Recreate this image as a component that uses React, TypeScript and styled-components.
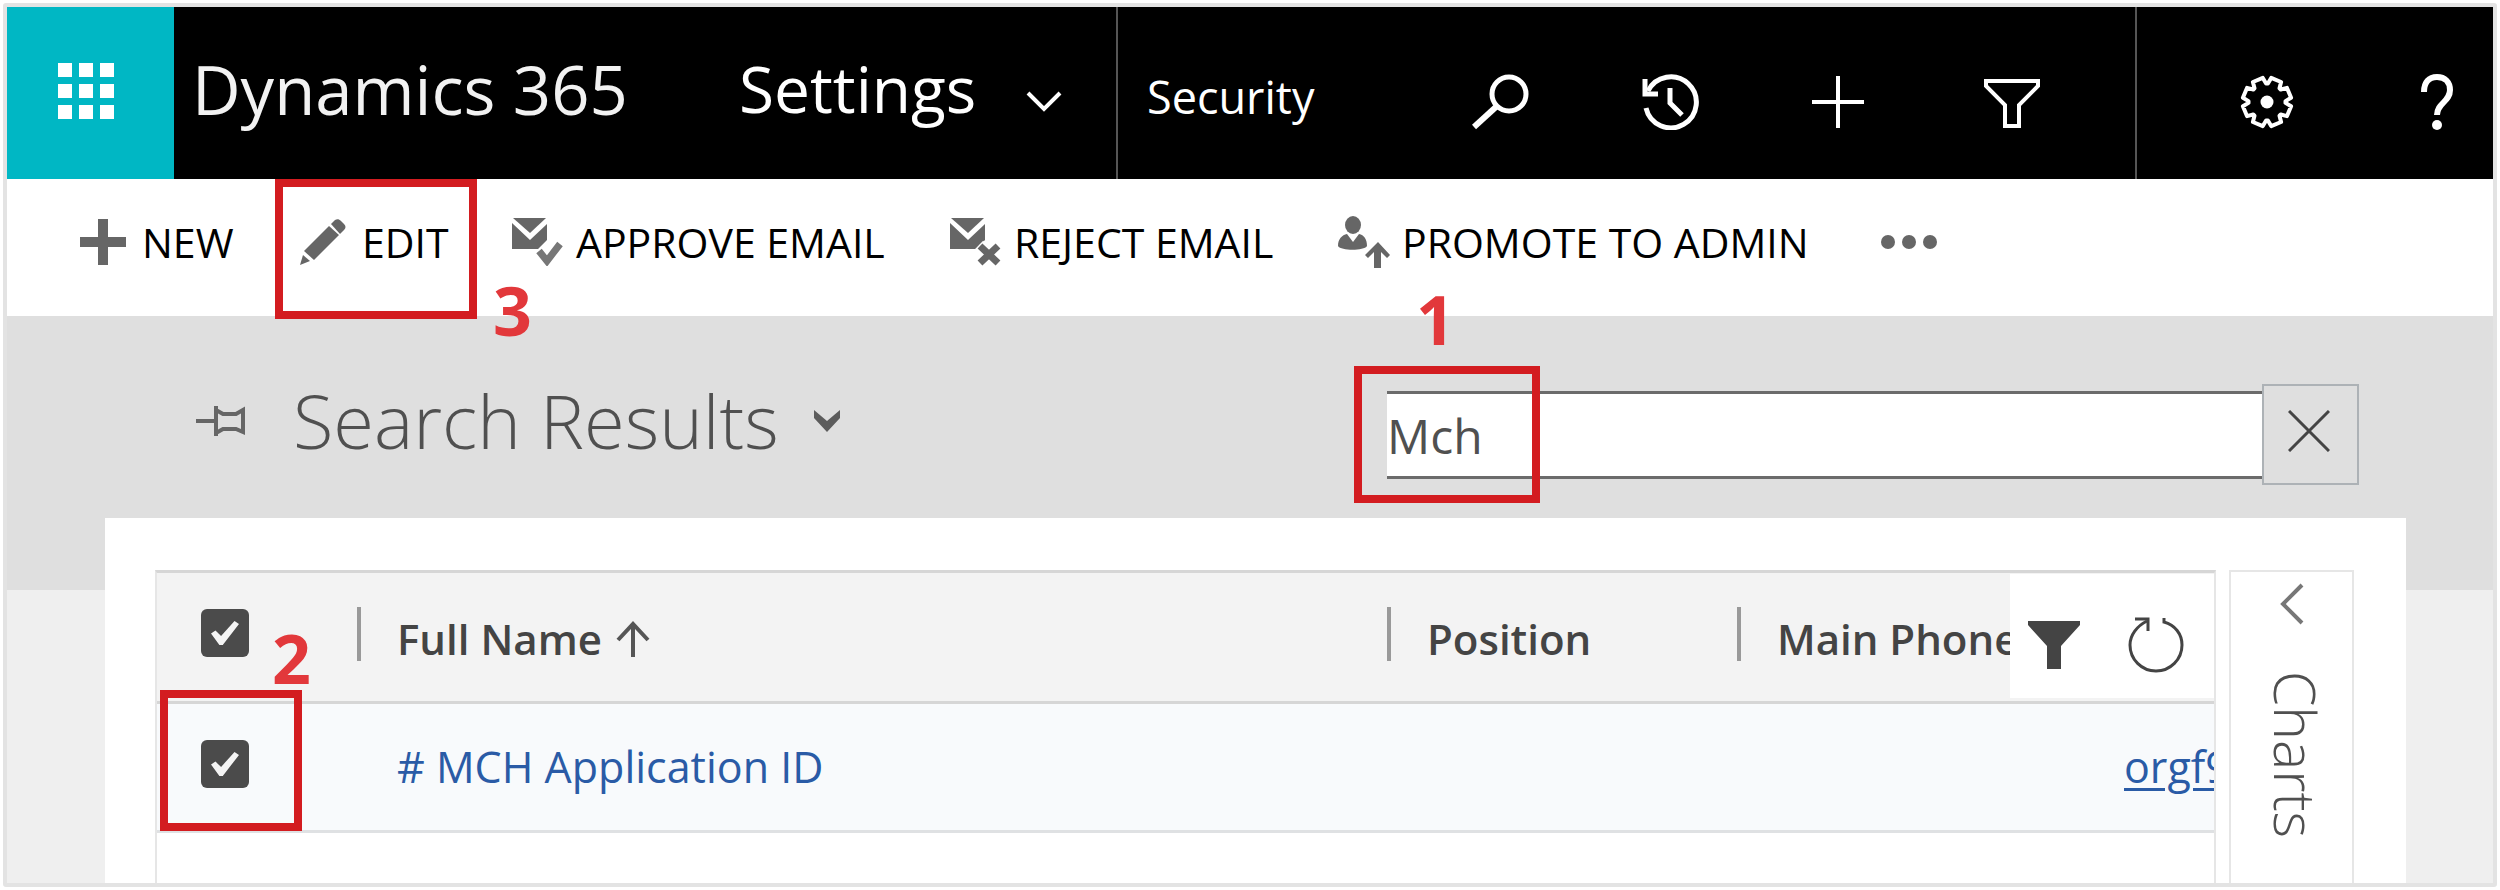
import React, { useState } from "react";
import styled, { createGlobalStyle } from "styled-components";

const font = `"Open Sans", "Noto Sans", sans-serif`;

const GlobalStyle = createGlobalStyle`
  *, *::before, *::after { box-sizing: border-box; }
  body { margin: 0; background: #fff; font-family: ${font}; color: #000; }
  button, input { font-family: inherit; color: inherit; }
  button { border: 0; padding: 0; background: none; cursor: pointer; }
  svg { display: block; flex: none; }
`;

const Frame = styled.div`
  margin: 3px;
  border: 4px solid #e3e3e3;
  border-radius: 3px;
  height: calc(100vh - 6px);
  display: flex;
  flex-direction: column;
  overflow: hidden;
`;

/* ---------- top navigation ---------- */

const TopBar = styled.header`
  flex: none;
  display: flex;
  height: 172px;
  background: #000;
  color: #fff;
`;

const Launcher = styled.button`
  flex: none;
  width: 167px;
  padding: 0 0 4px 51px;
  background: #00b7c4;
  display: flex;
  align-items: center;
`;

const Brand = styled.a`
  flex: none;
  width: 543px;
  padding: 0 0 0 18px;
  color: #f2f2f2;
  font-size: 67px;
  line-height: 164px;
  text-decoration: none;
  white-space: nowrap;
`;

const AreaButton = styled.button`
  flex: none;
  display: flex;
  align-items: center;
  gap: 50px;
  width: 401px;
  padding: 0 0 10px 22px;
  font-size: 64px;
  border-right: 2px solid #555;
`;

const AreaChevron = styled.span`
  padding-top: 26px;
`;

const SubArea = styled.a`
  flex: none;
  width: 352px;
  padding-left: 29px;
  color: #fff;
  font-size: 45px;
  line-height: 180px;
  text-decoration: none;
`;

const IconNav = styled.nav`
  flex: 1;
  display: flex;
  align-items: center;
  gap: 112px;
  padding: 18px 0 0 2px;
`;

const FunnelSlot = styled.span`
  padding: 6px 0 0 7px;
`;

const UserNav = styled.nav`
  flex: none;
  display: flex;
  align-items: center;
  gap: 126px;
  padding: 18px 40px 0 102px;
  border-left: 2px solid #555;
`;

/* ---------- command bar ---------- */

const CommandBar = styled.div`
  flex: none;
  display: flex;
  height: 137px;
  padding-left: 73px;
  background: #fff;
`;

const CommandSlot = styled.div<{ $width: number }>`
  position: relative;
  flex: none;
  width: ${(p) => p.$width}px;
`;

const Command = styled.button<{ $gap?: number }>`
  display: flex;
  align-items: center;
  gap: ${(p) => p.$gap ?? 12}px;
  height: 126px;
  font-size: 41px;
  white-space: nowrap;
`;

const Highlight = styled.span<{ $top: number; $left: number; $width: number; $height: number }>`
  position: absolute;
  z-index: 2;
  top: ${(p) => p.$top}px;
  left: ${(p) => p.$left}px;
  width: ${(p) => p.$width}px;
  height: ${(p) => p.$height}px;
  border: 8px solid #d31c20;
  pointer-events: none;
`;

const StepNumber = styled.span<{ $top: number; $left: number }>`
  position: absolute;
  z-index: 2;
  top: ${(p) => p.$top}px;
  left: ${(p) => p.$left}px;
  color: #e2383b;
  font-size: 68px;
  font-weight: 700;
  line-height: 72px;
  pointer-events: none;
`;

/* ---------- content ---------- */

const Main = styled.main`
  flex: 1;
  min-height: 0;
  display: flex;
  flex-direction: column;
  background: linear-gradient(#dfdfdf 274px, #efefef 274px);
`;

const ViewHeader = styled.div`
  flex: none;
  display: flex;
  justify-content: space-between;
  height: 202px;
  padding: 68px 134px 0 189px;
`;

const ViewPicker = styled.div`
  display: flex;
  align-items: center;
  height: 74px;
`;

const ViewTitle = styled.h1`
  margin: 0 35px 0 47px;
  color: #505050;
  font-size: 74px;
  font-weight: 300;
  line-height: 74px;
  white-space: nowrap;
`;

const SearchBox = styled.div`
  position: relative;
  display: flex;
  align-items: center;
  width: 972px;
  height: 101px;
`;

const SearchInput = styled.input`
  flex: 1;
  min-width: 0;
  height: 88px;
  padding: 2px 0 0;
  border: solid #6b6b6b;
  border-width: 3px 0;
  border-radius: 0;
  outline: 0;
  background: #fff;
  color: #505050;
  font-size: 48px;
`;

const ClearButton = styled.button`
  flex: none;
  width: 97px;
  height: 101px;
  padding: 0 4px 8px 0;
  border: 2px solid #adb2b6;
  display: grid;
  place-items: center;
`;

const Card = styled.section`
  flex: 1;
  display: flex;
  gap: 13px;
  min-height: 0;
  margin: 0 87px 0 98px;
  padding: 52px 52px 0 50px;
  background: #fff;
`;

const Grid = styled.div`
  position: relative;
  flex: 1;
  min-width: 0;
  border: 2px solid #e6e6e6;
  border-top: 3px solid #d6d6d6;
  border-bottom: 0;
`;

const GridClip = styled.div`
  height: 100%;
  overflow: hidden;
`;

const Table = styled.table`
  width: 100%;
  table-layout: fixed;
  border-collapse: separate;
  border-spacing: 0;
  font-size: 42px;
  line-height: 56px;
  white-space: nowrap;
`;

const Col = styled.col<{ $width?: number }>`
  width: ${(p) => (p.$width ? `${p.$width}px` : "auto")};
`;

const HeadCell = styled.th`
  height: 131px;
  padding: 4px 0 0;
  border-bottom: 3px solid #d6d6d6;
  background: #f3f3f3;
  color: #444;
  font-weight: 600;
  text-align: left;
`;

const HeadLabel = styled.div`
  display: flex;
  align-items: center;
  gap: 14px;
  position: relative;
  padding-left: 40px;

  &::before {
    content: "";
    position: absolute;
    top: -4px;
    left: 0;
    width: 4px;
    height: 54px;
    background: #999;
  }
`;

const Cell = styled.td<{ $indent?: number }>`
  height: 129px;
  padding: 0 0 0 ${(p) => p.$indent ?? 0}px;
  border-bottom: 3px solid #dfe1e3;
  background: #f8fafc;
  font-size: 43px;
`;

const CheckCell = styled.div`
  display: flex;
  padding-left: 44px;
  padding-bottom: 6px;
`;

const HeadCheckCell = styled(CheckCell)`
  padding-bottom: 12px;
`;

const Check = styled.input`
  appearance: none;
  display: grid;
  place-items: center;
  width: 48px;
  height: 48px;
  margin: 0;
  border: 0;
  border-radius: 6px;
  background: #4b4b4b;

  &:checked::after {
    content: "";
    width: 28px;
    height: 24px;
    background: #f4f4f4;
    clip-path: polygon(0 52%, 16% 40%, 36% 62%, 84% 0, 100% 12%, 42% 100%, 30% 100%);
  }
`;

const RecordLink = styled.a`
  color: #2a5ba6;
  text-decoration: none;
`;

const MailLink = styled(RecordLink)`
  text-decoration: underline;
  text-decoration-thickness: 3px;
  text-underline-offset: 5px;
`;

const GridTools = styled.div`
  position: absolute;
  top: 1px;
  right: 0;
  display: flex;
  align-items: center;
  gap: 48px;
  width: 204px;
  height: 124px;
  padding: 18px 18px 0;
  background: #fff;
`;

const ChartsPane = styled.aside`
  flex: none;
  width: 125px;
  border: 2px solid #e6e6e6;
  border-bottom: 0;
`;

const ChartsToggle = styled.button`
  display: flex;
  flex-direction: column;
  align-items: center;
  gap: 46px;
  width: 100%;
  padding-top: 11px;
  color: #505050;
`;

const ChartsLabel = styled.span`
  writing-mode: vertical-rl;
  padding-left: 8px;
  font-size: 57px;
  font-weight: 300;
  line-height: 72px;
`;

/* ---------- icons ---------- */

const Waffle = () => (
  <svg width="56" height="56" viewBox="0 0 56 56" fill="#fff" aria-hidden="true">
    {[0, 21, 42].map((y) => [0, 21, 42].map((x) => <rect key={`${x}-${y}`} x={x} y={y} width="14" height="14" />))}
  </svg>
);

const DownIcon = () => (
  <svg width="36" height="21" viewBox="0 0 36 21" fill="none" stroke="#fff" strokeWidth="4" aria-hidden="true">
    <path d="M2 2l16 16L34 2" />
  </svg>
);

const SearchIcon = () => (
  <svg width="58" height="56" viewBox="0 0 58 56" fill="none" stroke="#fff" strokeWidth="5" aria-hidden="true">
    <circle cx="37" cy="20" r="17" />
    <path d="M25 32L2 53" strokeWidth="6" />
  </svg>
);

const HistoryIcon = () => (
  <svg width="58" height="56" viewBox="0 0 58 56" fill="none" stroke="#fff" strokeWidth="5" aria-hidden="true">
    <path d="M4 34A25.500 25.500 0 1 0 6 17" />
    <path d="M3 5v15h13M28 14v15l12 12" />
  </svg>
);

const AddIcon = () => (
  <svg width="52" height="52" viewBox="0 0 52 52" stroke="#fff" strokeWidth="4" aria-hidden="true">
    <path d="M26 0v52M0 26h52" />
  </svg>
);

const FunnelIcon = () => (
  <svg width="58" height="50" viewBox="0 0 58 50" fill="none" stroke="#fff" strokeWidth="4" aria-hidden="true">
    <path d="M3 3h52v5L36 27v21H22V27L3 8z" />
  </svg>
);

const gearPath = (() => {
  const points: string[] = [];
  const teeth = 8;
  for (let i = 0; i < teeth; i++) {
    [
      [-0.06, 18.5],
      [0.06, 18.5],
      [0.22, 24.5],
      [0.78, 24.5],
    ].forEach(([t, r]) => {
      const a = ((i + t) / teeth) * Math.PI * 2 - Math.PI / 2;
      points.push(`${(28 + r * Math.cos(a)).toFixed(1)} ${(28 + r * Math.sin(a)).toFixed(1)}`);
    });
  }
  return `M${points.join("L")}Z`;
})();

const GearIcon = () => (
  <svg width="56" height="56" viewBox="0 0 56 56" fill="none" stroke="#fff" strokeWidth="4" strokeLinejoin="round" aria-hidden="true">
    <path d={gearPath} />
    <circle cx="28" cy="28" r="6.500" fill="#fff" stroke="none" />
  </svg>
);

const HelpIcon = () => (
  <svg width="32" height="56" viewBox="0 0 32 56" fill="none" stroke="#fff" strokeWidth="6" aria-hidden="true">
    <path d="M3 18C3 8 8 3 16 3s13 5 13 13c0 12-13 13-13 25" />
    <circle cx="16" cy="51" r="5" fill="#fff" stroke="none" />
  </svg>
);

const NewIcon = () => (
  <svg width="46" height="46" viewBox="0 0 46 46" fill="#666" aria-hidden="true">
    <path d="M18 0h10v18h18v10H28v18H18V28H0V18h18z" />
  </svg>
);

const PencilIcon = () => (
  <svg width="46" height="46" viewBox="0 0 46 46" fill="#666" aria-hidden="true">
    <path d="M29 7l10 9-25 25-10-9z" />
    <path d="M31 5l4-4c2-1 4-1 6 1l3 3c2 2 2 4 0 6l-4 4z" />
    <path d="M3 36l7 6-10 4z" />
  </svg>
);

const Envelope = () => (
  <>
    <path d="M1 0h33L18 15z" />
    <path d="M0 5l18 17L35 6v16l-9 9H0z" />
  </>
);

const ApproveIcon = () => (
  <svg width="52" height="48" viewBox="0 0 52 48" fill="#666" aria-hidden="true">
    <Envelope />
    <path d="M27 33l8 10L48 26" fill="none" stroke="#777" strokeWidth="7" />
  </svg>
);

const RejectIcon = () => (
  <svg width="52" height="48" viewBox="0 0 52 48" fill="#666" aria-hidden="true">
    <Envelope />
    <path d="M29 27l20 19M49 27L29 46" stroke="#fff" strokeWidth="12" />
    <path d="M30 28l18 17M48 28L30 45" stroke="#666" strokeWidth="7" />
  </svg>
);

const PromoteIcon = () => (
  <svg width="52" height="52" viewBox="0 0 52 52" fill="#666" aria-hidden="true">
    <ellipse cx="15" cy="9" rx="8" ry="9" />
    <path d="M0 30c0-7 4-11 9-12l6 8 6-8c5 1 8 5 8 12-3 5-26 5-29 0z" />
    <path d="M40 26l12 13-3 3-6-6v16h-7V36l-6 6-3-3z" />
  </svg>
);

const MoreIcon = () => (
  <svg width="56" height="14" viewBox="0 0 56 14" fill="#666" aria-hidden="true">
    <circle cx="7" cy="7" r="7" />
    <circle cx="28" cy="7" r="7" />
    <circle cx="49" cy="7" r="7" />
  </svg>
);

const PinIcon = () => (
  <svg width="50" height="30" viewBox="0 0 50 30" fill="none" stroke="#666" strokeWidth="4" aria-hidden="true">
    <path d="M0 15h19M20 0v30M20 4l7 4h13l7-4v22l-7-3H27l-7 4" />
  </svg>
);

const ViewChevron = () => (
  <svg width="26" height="22" viewBox="0 0 26 22" fill="#5c5c5c" aria-hidden="true">
    <path d="M0 0l13 11L26 0v8L13 22 0 8z" />
  </svg>
);

const CloseIcon = () => (
  <svg width="42" height="42" viewBox="0 0 42 42" stroke="#444" strokeWidth="3" aria-hidden="true">
    <path d="M1 1l40 40M41 1L1 41" />
  </svg>
);

const SortIcon = () => (
  <svg width="34" height="36" viewBox="0 0 34 36" fill="none" stroke="#555" strokeWidth="4" aria-hidden="true">
    <path d="M17 36V3M2 19L17 3l15 16" />
  </svg>
);

const SolidFunnel = () => (
  <svg width="52" height="48" viewBox="0 0 52 48" fill="#444" aria-hidden="true">
    <path d="M0 0h52v4L33 25v23H19V25L0 4z" />
  </svg>
);

const RefreshIcon = () => (
  <svg width="56" height="56" viewBox="0 0 56 56" fill="none" stroke="#444" strokeWidth="3" aria-hidden="true">
    <path d="M36 1v4C47 8 54 17 54 28a26 26 0 0 1-52 0C2 18 9 9 19 4" />
    <path d="M7 2h13v12" />
  </svg>
);

const LeftIcon = () => (
  <svg width="24" height="42" viewBox="0 0 24 42" fill="none" stroke="#777" strokeWidth="4" aria-hidden="true">
    <path d="M22 2L3 21l19 19" />
  </svg>
);

const NavButton = styled.button`
  flex: none;
`;

export default function App() {
  const [query, setQuery] = useState("Mch");
  return (
    <>
      <GlobalStyle />
      <Frame>
        <TopBar>
          <Launcher aria-label="App launcher"><Waffle /></Launcher>
          <Brand href="#">Dynamics 365</Brand>
          <AreaButton>
            Settings
            <AreaChevron><DownIcon /></AreaChevron>
          </AreaButton>
          <SubArea href="#">Security</SubArea>
          <IconNav aria-label="Tools">
            <NavButton aria-label="Search"><SearchIcon /></NavButton>
            <NavButton aria-label="Recent"><HistoryIcon /></NavButton>
            <NavButton aria-label="Create"><AddIcon /></NavButton>
            <FunnelSlot>
              <NavButton aria-label="Advanced find"><FunnelIcon /></NavButton>
            </FunnelSlot>
          </IconNav>
          <UserNav aria-label="Options">
            <NavButton aria-label="Options"><GearIcon /></NavButton>
            <NavButton aria-label="Help"><HelpIcon /></NavButton>
          </UserNav>
        </TopBar>

        <CommandBar>
          <CommandSlot $width={220}>
            <Command $gap={16}><NewIcon />NEW</Command>
          </CommandSlot>
          <CommandSlot $width={212}>
            <Command $gap={16}><PencilIcon />EDIT</Command>
            <Highlight $top={0} $left={-25} $width={202} $height={140} />
            <StepNumber $top={95} $left={193}>3</StepNumber>
          </CommandSlot>
          <CommandSlot $width={438}>
            <Command><ApproveIcon />APPROVE EMAIL</Command>
          </CommandSlot>
          <CommandSlot $width={388}>
            <Command><RejectIcon />REJECT EMAIL</Command>
          </CommandSlot>
          <CommandSlot $width={543}>
            <Command><PromoteIcon />PROMOTE TO ADMIN</Command>
          </CommandSlot>
          <CommandSlot $width={56}>
            <Command aria-label="More commands"><MoreIcon /></Command>
          </CommandSlot>
        </CommandBar>

        <Main>
          <ViewHeader>
            <ViewPicker>
              <PinIcon />
              <ViewTitle>Search Results</ViewTitle>
              <NavButton aria-label="Change view"><ViewChevron /></NavButton>
            </ViewPicker>
            <SearchBox>
              <SearchInput
                type="text"
                aria-label="Search for records"
                value={query}
                onChange={(e) => setQuery(e.target.value)}
              />
              <ClearButton aria-label="Clear search" onClick={() => setQuery("")}><CloseIcon /></ClearButton>
              <Highlight $top={-18} $left={-33} $width={186} $height={137} />
              <StepNumber $top={-101} $left={29}>1</StepNumber>
            </SearchBox>
          </ViewHeader>

          <Card>
            <Grid>
              <GridClip>
                <Table>
                  <colgroup>
                    <Col $width={200} />
                    <Col />
                    <Col $width={350} />
                    <Col $width={387} />
                    <Col $width={90} />
                  </colgroup>
                  <thead>
                    <tr>
                      <HeadCell>
                        <HeadCheckCell><Check type="checkbox" aria-label="Select all records" defaultChecked /></HeadCheckCell>
                      </HeadCell>
                      <HeadCell><HeadLabel>Full Name<SortIcon /></HeadLabel></HeadCell>
                      <HeadCell><HeadLabel>Position</HeadLabel></HeadCell>
                      <HeadCell><HeadLabel>Main Phone</HeadLabel></HeadCell>
                      <HeadCell aria-label="Email" />
                    </tr>
                  </thead>
                  <tbody>
                    <tr>
                      <Cell>
                        <CheckCell><Check type="checkbox" aria-label="Select MCH Application ID" defaultChecked /></CheckCell>
                      </Cell>
                      <Cell $indent={40}><RecordLink href="#"># MCH Application ID</RecordLink></Cell>
                      <Cell />
                      <Cell />
                      <Cell><MailLink href="#">orgf9</MailLink></Cell>
                    </tr>
                  </tbody>
                </Table>
              </GridClip>
              <GridTools>
                <NavButton aria-label="Filter"><SolidFunnel /></NavButton>
                <NavButton aria-label="Refresh"><RefreshIcon /></NavButton>
              </GridTools>
              <Highlight $top={117} $left={3} $width={142} $height={141} />
              <StepNumber $top={49} $left={115}>2</StepNumber>
            </Grid>
            <ChartsPane>
              <ChartsToggle>
                <LeftIcon />
                <ChartsLabel>Charts</ChartsLabel>
              </ChartsToggle>
            </ChartsPane>
          </Card>
        </Main>
      </Frame>
    </>
  );
}
